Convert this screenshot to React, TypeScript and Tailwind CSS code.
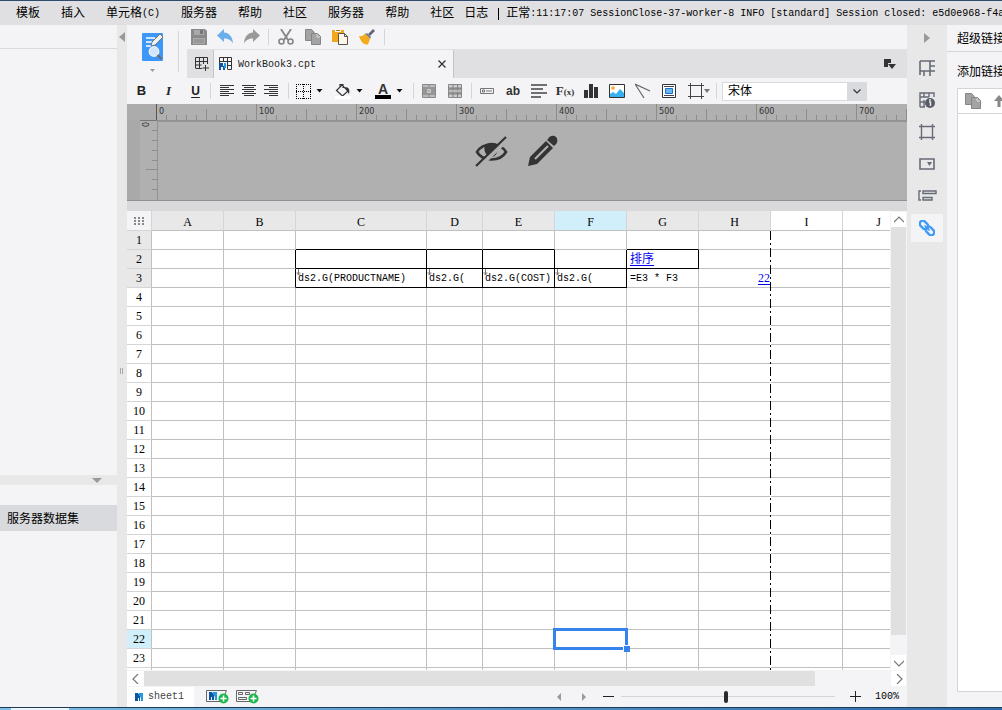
import React, { useState } from 'react';

const MENUS = ['模板', '插入', '单元格(C)', '服务器', '帮助', '社区', '服务器', '帮助', '社区'];

const COLUMNS = [
  { name: 'A', width: 72 },
  { name: 'B', width: 72 },
  { name: 'C', width: 131 },
  { name: 'D', width: 56 },
  { name: 'E', width: 72 },
  { name: 'F', width: 72 },
  { name: 'G', width: 72 },
  { name: 'H', width: 72 },
  { name: 'I', width: 72 },
  { name: 'J', width: 72 },
];

const ROWS = Array.from({ length: 24 }, (_, i) => i + 1);

// Cells bound to a dataset column expand downwards
const FIELDS: Record<string, string> = {
  C3: 'ds2.G(PRODUCTNAME)',
  D3: 'ds2.G(',
  E3: 'ds2.G(COST)',
  F3: 'ds2.G(',
};

const DARK_RIGHT = ['B2', 'C2', 'D2', 'E2', 'F2', 'G2', 'B3', 'C3', 'D3', 'E3', 'F3'];
const DARK_BOTTOM = ['C1', 'D1', 'E1', 'G1', 'C2', 'D2', 'E2', 'F2', 'G2', 'C3', 'D3', 'E3', 'F3'];

type IconProps = { children: React.ReactNode; className?: string; box?: string };

function Icon({ children, className = 'w-4 h-4', box = '0 0 16 16' }: IconProps) {
  return (
    <svg viewBox={box} className={`shrink-0 ${className}`} fill="none" aria-hidden="true">
      {children}
    </svg>
  );
}

function Sep() {
  return <span className="w-px h-4 shrink-0 bg-[#d5d5d8]" />;
}

function Caret() {
  return (
    <Icon className="w-[7px] h-1" box="0 0 7 4">
      <path d="M0.5 0h6L3.5 3.5z" fill="#111" />
    </Icon>
  );
}

type ToolProps = { label: string; className?: string; children: React.ReactNode };

function Tool({ label, className = 'w-[26px]', children }: ToolProps) {
  return (
    <button type="button" aria-label={label} className={`h-6 shrink-0 flex items-center justify-center ${className}`}>
      {children}
    </button>
  );
}

function CopyShape() {
  return (
    <>
      <path d="M.5.5h6L9 3v8.500H.5z" fill="#a3a3a3" stroke="#858585" />
      <path d="M6.500 4.500h6l3 3v8h-9z" fill="#a3a3a3" stroke="#858585" />
      <path d="M12 5v3h3" stroke="#ddd" />
    </>
  );
}

function MenuBar() {
  return (
    <div className="h-6 shrink-0 bg-[#e0e0e2] flex items-center pl-4 pt-[2px] whitespace-nowrap overflow-hidden">
      <nav className="flex gap-[21px] shrink-0">
        {MENUS.map((m, i) => (
          <button key={i} type="button" className="flex items-center">
            {m.replace('(C)', '')}
            {m.endsWith('(C)') && <span className="text-[10px]">(C)</span>}
          </button>
        ))}
      </nav>
      <div className="flex items-center pl-[10px]">
        <span>日志</span>
        <span className="w-px h-3 bg-black ml-[10px] mr-[7px]" />
        <span>正常</span>
        <span className="text-[10px] whitespace-pre">:11:17:07 SessionClose-37-worker-8 INFO [standard] Session closed: e5d0e968-f4a</span>
      </div>
    </div>
  );
}

function LeftPanel() {
  return (
    <aside className="w-[117px] shrink-0 flex flex-col">
      <div className="h-6 shrink-0 border-b border-[#dadadc]" />
      <div className="flex-1" />
      <div className="h-[10px] shrink-0 bg-[#e8e8e8] flex items-center pl-[92px]">
        <Icon className="w-[10px] h-[5px]" box="0 0 10 5">
          <path d="M0 0h10L5 5z" fill="#999" />
        </Icon>
      </div>
      <div className="h-[222px] shrink-0 pt-5">
        <div className="h-[26px] bg-[#d9dadd] flex items-center pl-[7px] pt-[3px]">服务器数据集</div>
      </div>
    </aside>
  );
}

function Divider() {
  return (
    <div className="w-[10px] shrink-0 bg-[#e8e8e8] flex flex-col items-center">
      <button type="button" aria-label="收起" className="h-6 shrink-0 flex items-center">
        <Icon className="w-[6px] h-[10px]" box="0 0 6 10">
          <path d="M6 0v10L0 5z" fill="#999" />
        </Icon>
      </button>
      <div className="flex-1 flex items-center gap-px pr-px pb-[14px]">
        <span className="w-px h-[6px] bg-[#aaa]" />
        <span className="w-px h-[6px] bg-[#aaa]" />
      </div>
    </div>
  );
}

function TopTools() {
  return (
    <div className="h-[25px] shrink-0 border-b border-[#e0e0e2] flex items-center">
      <Tool label="保存" className="w-[24px]">
        <Icon>
          <path d="M0 0h14l2 2v14H0z" fill="#8a8a8a" />
          <path d="M3 1h10v5H3zM2 9h12v6H2z" fill="#a9a9a9" />
          <path d="M9 1h3v4H9z" fill="#777" />
          <path d="M3 11h10M3 13h10" stroke="#888" />
        </Icon>
      </Tool>
      <Tool label="撤销" className="w-[27px]">
        <Icon>
          <path d="M0 6.500L7 0v3.500c5 .3 8.500 4 9 11-2-3.500-4.500-5-9-5V13z" fill="#6aaeeb" />
        </Icon>
      </Tool>
      <Tool label="重做" className="w-[27px]">
        <Icon>
          <path d="M16 6.500L9 0v3.500C4 3.800.5 7.500 0 14.500c2-3.500 4.500-5 9-5V13z" fill="#999" />
        </Icon>
      </Tool>
      <span className="w-[3px]" />
      <Sep />
      <span className="w-[3px]" />
      <Tool label="剪切" className="w-[27px]">
        <Icon>
          <path d="M3 0l7 11M13 0L6 11" stroke="#858585" strokeWidth="1.800" />
          <circle cx="3.500" cy="12.500" r="2.500" stroke="#858585" strokeWidth="1.600" />
          <circle cx="12.500" cy="12.500" r="2.500" stroke="#858585" strokeWidth="1.600" />
        </Icon>
      </Tool>
      <Tool label="复制" className="w-[27px]">
        <Icon><CopyShape /></Icon>
      </Tool>
      <Tool label="粘贴" className="w-[27px]">
        <Icon>
          <path d="M0 1h12v12H0z" fill="#f0a818" />
          <path d="M3 0h6v3H3z" fill="#fff" />
          <path d="M4 1.500h4" stroke="#b5651d" />
          <path d="M6.500 4.500h6l3 3v8h-9z" fill="#fff7e6" stroke="#555" />
          <path d="M12.500 4.500v3h3" stroke="#555" />
        </Icon>
      </Tool>
      <Tool label="格式刷" className="w-[27px]">
        <Icon>
          <path d="M15 1l-5 5" stroke="#5d6478" strokeWidth="2.600" />
          <path d="M8 4l4 4-1 2-5-5z" fill="#777d90" />
          <path d="M6 4.500l5 5.500-2 5.500c-4 .5-7-2-9-8.500 3 .5 4.500-.5 6-2.500z" fill="#f4ac1c" />
        </Icon>
      </Tool>
      <span className="w-1" />
      <Sep />
    </div>
  );
}

function TabBar() {
  return (
    <div className="h-7 shrink-0 bg-[#e0e0e2] flex items-center">
      <button type="button" aria-label="新建" className="w-[27px] h-7 border-r border-[#c4c4c6] flex items-center justify-center pl-1">
        <Icon className="w-[14px] h-[14px]" box="0 0 14 14">
          <path d="M.5 11V.5h12V7M.5 4.500h12M.5 11.500H7M4.500.5v11M8.500.5V7M.5 8h6M10.500 8v6M7.500 11h6.500" stroke="#333" />
        </Icon>
      </button>
      <div className="w-[240px] h-7 bg-[#f4f4f7] border-r border-[#c4c4c6] flex items-center pl-[5px] pr-[5px]">
        <Icon className="w-[14px] h-[14px]" box="0 0 14 14">
          <path d="M.5 6V.5h12v12H9M.5 4.500h12M4.500.5v4M8.500.5v12M8 8.500h4.500" stroke="#333" />
          <path d="M0 6h4v3h2v4H4V10H2v3H0z" fill="#0c55a0" />
          <path d="M5 6h2v5H5z" fill="#1d9be0" />
        </Icon>
        <span className="text-[10px] ml-[5px] pt-[2px] flex-1 text-[#222]">WorkBook3.cpt</span>
        <button type="button" aria-label="关闭" className="w-3 h-3 flex items-center justify-center">
          <Icon className="w-2 h-2" box="0 0 8 8">
            <path d="M.5.5l7 7M7.500.5l-7 7" stroke="#333" strokeWidth="1.300" />
          </Icon>
        </button>
      </div>
      <span className="flex-1" />
      <Tool label="标签列表" className="w-3 mr-[11px]">
        <Icon className="w-3 h-3" box="0 0 12 12">
          <path d="M0 1h7v4H4v4H0z" fill="#333" />
          <path d="M4 6h8L8 11z" fill="#333" />
        </Icon>
      </Tool>
    </div>
  );
}

function FormatBar() {
  return (
    <div className="h-[26px] shrink-0 flex items-center">
      <div className="flex pl-px pr-px">
        <Tool label="加粗" className="w-[27px]"><b className="text-[13px] font-['Liberation_Sans',sans-serif] text-[#222]">B</b></Tool>
        <Tool label="斜体" className="w-[27px]"><b className="text-[13px] italic font-['Liberation_Serif',serif] text-[#222]">I</b></Tool>
        <Tool label="下划线" className="w-[27px]"><b className="text-[12px] underline underline-offset-2 font-['Liberation_Sans',sans-serif] text-[#222]">U</b></Tool>
      </div>
      <Sep />
      <div className="flex pl-[5px] pr-[6px]">
        <Tool label="左对齐" className="w-[22px]">
          <Icon><path d="M1 2.500h14M1 4.500h9M1 6.500h14M1 8.500h9M1 10.500h14M1 12.500h9" stroke="#333" /></Icon>
        </Tool>
        <Tool label="居中" className="w-[22px]">
          <Icon><path d="M1 2.500h14M3 4.500h10M1 6.500h14M3 8.500h10M1 10.500h14M3 12.500h10" stroke="#333" /></Icon>
        </Tool>
        <Tool label="右对齐" className="w-[22px]">
          <Icon><path d="M1 2.500h14M6 4.500h9M1 6.500h14M6 8.500h9M1 10.500h14M6 12.500h9" stroke="#333" /></Icon>
        </Tool>
      </div>
      <Sep />
      <div className="flex pr-1">
        <Tool label="边框" className="w-10 gap-[5px]">
          <Icon className="w-[15px] h-[15px]" box="0 0 15 15">
            <path d="M0 .5h15M0 14.500h15M.5 0v15M14.500 0v15M7.500 0v15M0 7.500h15" stroke="#000" strokeDasharray="1 1" shapeRendering="crispEdges" />
          </Icon>
          <Caret />
        </Tool>
        <Tool label="填充色" className="w-10 gap-[5px]">
          <Icon>
            <path d="M1.500 7.500L7 2l6 6-5.500 5L1.500 7.500zM5 5V1.500h3V5" stroke="#333" strokeWidth="1.200" />
            <path d="M10 4c4 0 5 3 4 7l-2-3z" fill="#333" />
            <path d="M0 13h16v3H0z" fill="#fff" />
          </Icon>
          <Caret />
        </Tool>
        <Tool label="字体颜色" className="w-10 gap-[5px]">
          <span className="w-4 flex flex-col items-center">
            <b className="text-[14px] leading-[12px] font-['Liberation_Sans',sans-serif] text-[#333]">A</b>
            <span className="w-4 h-1 bg-black" />
          </span>
          <Caret />
        </Tool>
      </div>
      <Sep />
      <div className="flex pl-[2px] pr-[3px]">
        <Tool label="合并单元格">
          <Icon className="w-[14px] h-[14px]" box="0 0 14 14">
            <path d="M.5.5h13v13H.5z" fill="#bbb" stroke="#888" />
            <path d="M1 3h12v8H1z" fill="#969696" />
            <path d="M7 0v3M7 11v3" stroke="#888" />
            <path d="M5 5.500h3.500v3H5.500V7h3" stroke="#ccc" />
          </Icon>
        </Tool>
        <Tool label="取消合并">
          <Icon className="w-[14px] h-[14px]" box="0 0 14 14">
            <path d="M.5.500h13v13H.5z" fill="#ccc" stroke="#888" />
            <path d="M1 4h12v6H1z" fill="#999" />
            <path d="M0 4h14M0 10h14M5 0v14M9.500 0v14" stroke="#808080" />
            <path d="M1 7h12" stroke="#ddd" />
          </Icon>
        </Tool>
      </div>
      <Sep />
      <div className="flex pl-[2px]">
        <Tool label="控件">
          <Icon className="w-[14px] h-[6px]" box="0 0 14 6">
            <path d="M.5.500h13v5H.5zM2.500 2h2v2h-2zM6 3h6" stroke="#777" />
          </Icon>
        </Tool>
        <Tool label="文本"><b className="text-[12px] font-['Liberation_Sans',sans-serif] text-[#333]">ab</b></Tool>
        <Tool label="富文本">
          <Icon><path d="M0 2h16M0 6h12M0 10h16M0 14h10" stroke="#444" strokeWidth="1.600" /></Icon>
        </Tool>
        <Tool label="公式">
          <span className="font-['Liberation_Serif',serif] font-bold text-[13px] text-[#333]">F<span className="text-[9px]">(x)</span></span>
        </Tool>
        <Tool label="图表">
          <Icon className="w-[14px] h-[14px]" box="0 0 14 14">
            <path d="M0 6h4v8H0zM5 0h4v14H5zM10 3h4v11h-4z" fill="#333" />
          </Icon>
        </Tool>
        <Tool label="图片">
          <Icon>
            <path d="M.5 1.500h15v13H.5z" fill="#fff" stroke="#333" />
            <circle cx="4" cy="5" r="1.700" fill="#f5a623" />
            <path d="M1 14v-3l3-2 3 2 4-5 4 4v4z" fill="#37b1f0" />
          </Icon>
        </Tool>
        <Tool label="斜线">
          <Icon><path d="M0 1l9 14M0 1l15 7" stroke="#666" strokeWidth="1.200" /></Icon>
        </Tool>
        <Tool label="子报表">
          <Icon className="w-[14px] h-4" box="0 0 14 16">
            <path d="M.5 1.500h13v13H.5z" fill="#fff" stroke="#333" />
            <path d="M2 3.500h10M2 12.500h10" stroke="#444" />
            <path d="M3.500 5.500h7v5h-7z" fill="#65b7f2" stroke="#1d6fd0" />
          </Icon>
        </Tool>
        <Tool label="悬浮元素" className="w-[34px]">
          <Icon>
            <path d="M2.500 0v16M13.500 0v16M0 2.500h16M0 13.500h16" stroke="#444" />
          </Icon>
          <Icon className="w-[6px] h-1" box="0 0 6 4"><path d="M0 0h6L3 4z" fill="#777" /></Icon>
        </Tool>
      </div>
      <Sep />
      <label className="ml-[5px] w-[145px] h-[19px] grid border border-[#d9dadd] bg-white">
        <select aria-label="字体" className="col-start-1 row-start-1 appearance-none h-[17px] pl-[5px] pt-px leading-4 outline-none">
          <option>宋体</option>
        </select>
        <span className="col-start-1 row-start-1 justify-self-end w-[19px] bg-[#d9dadd] flex items-center justify-center pointer-events-none">
          <Icon className="w-2 h-[5px]" box="0 0 8 5"><path d="M.5.5L4 4 7.500.5" stroke="#333" strokeWidth="1.200" /></Icon>
        </span>
      </label>
    </div>
  );
}

function ruleTicks(count: number) {
  return Array.from({ length: count }, (_, i) => ({ at: i * 10, len: i % 10 === 0 ? 16 : i % 5 === 0 ? 11 : 5 }));
}

function ParamPane() {
  return (
    <div className="h-[97px] shrink-0 bg-[#b0b0b0] border-b border-[#909090] flex flex-col overflow-hidden">
      <div className="h-4 shrink-0 flex">
        <div className="w-[29px] shrink-0 bg-[#acacac]" />
        <svg className="flex-1 min-w-0 h-4" aria-hidden="true" shapeRendering="crispEdges">
          {ruleTicks(76).map((t) => (
            <React.Fragment key={t.at}>
              <path d={`M${t.at + 0.5} ${16 - t.len}V16`} stroke={t.at === 0 ? '#555' : '#8c8c8c'} />
              {t.at % 100 === 0 && (
                <text x={t.at + 3} y="10" fill="#333" className="text-[9px] font-['DejaVu_Sans_Condensed','DejaVu_Sans',sans-serif]">{t.at}</text>
              )}
            </React.Fragment>
          ))}
        </svg>
      </div>
      <div className="flex-1 flex">
        <div className="w-[13px] shrink-0 bg-[#a9a9a9]" />
        <svg className="w-[17px] shrink-0 h-20 border-t border-[#777]" viewBox="0 0 17 80" aria-hidden="true" shapeRendering="crispEdges">
          {ruleTicks(8).slice(1).map((t) => (
            <path key={t.at} d={`M${17 - t.len} ${t.at - 0.5}H17`} stroke="#8c8c8c" />
          ))}
          <text transform="rotate(-90)" x="-6" y="9" fill="#333" className="text-[9px] font-['DejaVu_Sans_Condensed','DejaVu_Sans',sans-serif]">0</text>
        </svg>
        <div className="flex-1 border-t-2 border-l border-[#939393] flex justify-center gap-[19px] pt-[13px] pr-8">
          <button type="button" aria-label="隐藏参数面板" className="w-[33px] h-[32px]">
            <Icon className="w-[33px] h-[32px]" box="0 0 33 32">
              <path d="M2 17C8 7 25 7 31 17 25 27 8 27 2 17z" stroke="#333" strokeWidth="2.600" />
              <path d="M10 10c4-3 10-3 13 0 1 7-3 13-8 12-4-1-7-7-5-12z" fill="#333" />
              <path d="M3 33L33 4" stroke="#b0b0b0" strokeWidth="4" />
              <path d="M1 31L31 2" stroke="#333" strokeWidth="2.200" />
            </Icon>
          </button>
          <button type="button" aria-label="编辑参数面板" className="w-[31px] h-[32px]">
            <Icon className="w-[31px] h-[32px]" box="0 0 31 32">
              <path d="M1 31l2-9L19 6l7 7-16 16z" fill="#333" />
              <path d="M21 4c2-4 6-4 8-2s2 6-1 8l-1 1-7-6z" fill="#333" />
              <path d="M8 24L21 11" stroke="#b0b0b0" strokeWidth="2.200" />
            </Icon>
          </button>
        </div>
      </div>
    </div>
  );
}

function CellContent({ id }: { id: string }) {
  if (FIELDS[id]) {
    return (
      <span className="block pl-[2px] pt-px text-[10px]">
        <svg className="absolute left-0 top-0 w-[5px] h-[7px]" viewBox="0 0 5 7" fill="none" aria-hidden="true">
          <path d="M2.500 0v6M.5 4h4M1.500 5.500h2" stroke="#777" />
        </svg>
        {FIELDS[id]}
      </span>
    );
  }
  if (id === 'G2') return <a href="#sort" className="block pl-[3px] pt-[2px] leading-4 text-[#0000ee] underline underline-offset-2">排序</a>;
  if (id === 'G3') return <span className="block pl-[3px] pt-px text-[10px] whitespace-pre">=E3 * F3</span>;
  if (id === 'H3') return <a href="#detail" className="block text-right font-['Liberation_Serif',serif] text-[#0000ee] underline underline-offset-2">22</a>;
  if (id === 'H1') {
    // page break guide
    return <span className="absolute z-10 top-0 -right-px w-px h-[456px] bg-[repeating-linear-gradient(to_bottom,#000_0px,#000_9px,#fff_9px,#fff_12px,#000_12px,#000_14px,#fff_14px,#fff_17px)]" />;
  }
  if (id === 'F22') {
    return (
      <>
        <span className="absolute z-10 -top-[2px] -left-[2px] -right-[2px] -bottom-[2px] border-[3px] border-[#3584ee]" />
        <span className="absolute z-10 -bottom-1 -right-1 w-[7px] h-[7px] bg-[#3584ee] border-t border-l border-white" />
      </>
    );
  }
  return null;
}

function Grid() {
  return (
    <div className="flex-1 min-w-0 overflow-hidden bg-white">
      <table className="table-fixed w-[788px] border-separate border-spacing-0">
        <colgroup>
          <col className="w-[25px]" />
          {COLUMNS.map((c) => <col key={c.name} style={{ width: c.width }} />)}
        </colgroup>
        <thead>
          <tr className="h-5">
            <th className="p-0 h-5 bg-[#f4f4f7] border-r border-b border-[#d5d5d8]">
              <Icon className="w-[10px] h-2 mx-auto" box="0 0 10 8">
                <path d="M0 1h10M0 4h10M0 7h10" stroke="#888" strokeWidth="2" strokeDasharray="2 2" />
              </Icon>
            </th>
            {COLUMNS.map((c) => (
              <th
                key={c.name}
                scope="col"
                className={`p-0 h-5 pt-[3px] leading-4 font-normal font-['Liberation_Serif',serif] border-r border-b border-r-[#d5d5d8] border-b-[#c0c0c0] ${
                  c.name === 'F' ? 'bg-[#d0effb]' : c.name > 'H' ? 'bg-white' : 'bg-[#e8e8e8]'
                }`}
              >
                {c.name}
              </th>
            ))}
          </tr>
        </thead>
        <tbody>
          {ROWS.map((r) => (
            <tr key={r} className="h-[19px]">
              <th
                scope="row"
                className={`p-0 h-[19px] leading-[18px] font-normal font-['Liberation_Serif',serif] border-r border-b border-r-[#c0c0c0] border-b-[#d5d5d8] ${
                  r === 22 ? 'bg-[#d0effb]' : r > 3 ? 'bg-white' : 'bg-[#e8e8e8]'
                }`}
              >
                {r < 24 ? r : ''}
              </th>
              {COLUMNS.map((c) => {
                const id = c.name + r;
                return (
                  <td
                    key={id}
                    className={`relative p-0 h-[19px] leading-[17px] whitespace-nowrap border-r border-b ${
                      DARK_RIGHT.includes(id) ? 'border-r-black' : 'border-r-[#c0c0c0]'
                    } ${DARK_BOTTOM.includes(id) ? 'border-b-black' : 'border-b-[#c0c0c0]'}`}
                  >
                    <CellContent id={id} />
                  </td>
                );
              })}
            </tr>
          ))}
        </tbody>
      </table>
    </div>
  );
}

function ScrollArrow({ label, d }: { label: string; d: string }) {
  return (
    <button type="button" aria-label={label} className="w-[15px] h-[15px] shrink-0 bg-white flex items-center justify-center">
      <Icon className="w-[10px] h-[10px]" box="0 0 10 10"><path d={d} stroke="#777" strokeWidth="1.200" /></Icon>
    </button>
  );
}

function SheetPane() {
  return (
    <div className="flex-1 min-h-0 flex flex-col pt-[10px] bg-[#d9d9dc]">
      <div className="flex-1 min-h-0 flex">
        <Grid />
        <div className="w-[17px] shrink-0 bg-[#f4f4f7] flex flex-col items-center pt-px">
          <ScrollArrow label="向上" d="M0 7l5-5 5 5" />
          <div className="w-[15px] h-[408px] bg-[#e0e0e0]" />
          <div className="flex-1" />
          <ScrollArrow label="向下" d="M0 3l5 5 5-5" />
        </div>
      </div>
    </div>
  );
}

function NewSheetIcon({ kind }: { kind: 'report' | 'form' }) {
  return (
    <Icon className="w-[23px] h-[14px]" box="0 0 23 14">
      <path d="M17 11.500H.5V.5h20L19 4" stroke="#666" />
      {kind === 'report' ? (
        <>
          <path d="M3 2h3l2 3v5H6V7H5v3H3z" fill="#0c55a0" />
          <path d="M7 2h4v8H9V7L7 4z" fill="#2199e0" />
        </>
      ) : (
        <path d="M2.500 2.500h4v2h-4zM9.500 2.500h4v2h-4zM2.500 7.500h8v2h-8z" stroke="#666" />
      )}
      <circle cx="17.500" cy="8.500" r="5" fill="#1cb84c" />
      <path d="M14.500 8.500h6M17.500 5.500v6" stroke="#fff" strokeWidth="1.600" />
    </Icon>
  );
}

function BottomBar() {
  const [zoom, setZoom] = useState(49);

  return (
    <>
      <div className="h-4 shrink-0 flex items-center pt-px pr-px">
        <div className="w-[17px] flex justify-center bg-white">
          <ScrollArrow label="向左" d="M7 0L2 5l5 5" />
        </div>
        <div className="h-[15px] w-[671px] bg-[#e0e0e0]" />
        <div className="flex-1" />
        <ScrollArrow label="向右" d="M3 0l5 5-5 5" />
      </div>
      <div className="h-[21px] shrink-0 flex items-center">
        <button type="button" className="w-[67px] h-5 bg-white flex items-center pl-2 gap-[5px] text-[10px] text-[#444]">
          <Icon className="w-2 h-2" box="0 0 8 8">
            <path d="M0 0h3l2 3v5H4V5H3v3H0z" fill="#0c55a0" />
            <path d="M4 0h4v8H6V5L4 2z" fill="#2199e0" />
          </Icon>
          sheet1
        </button>
        <Tool label="新建报表" className="w-[23px] ml-3"><NewSheetIcon kind="report" /></Tool>
        <Tool label="新建表单" className="w-[23px] ml-[7px]"><NewSheetIcon kind="form" /></Tool>
        <span className="flex-1" />
        <Tool label="上一页" className="w-[25px]">
          <Icon className="w-1 h-2" box="0 0 4 8"><path d="M4 0v8L0 4z" fill="#999" /></Icon>
        </Tool>
        <Tool label="下一页" className="w-[25px]">
          <Icon className="w-1 h-2" box="0 0 4 8"><path d="M0 0v8l4-4z" fill="#999" /></Icon>
        </Tool>
        <Tool label="缩小" className="w-[25px]">
          <Icon className="w-[11px] h-[11px]" box="0 0 11 11"><path d="M0 5.500h11" stroke="#222" /></Icon>
        </Tool>
        <input
          type="range"
          aria-label="缩放"
          value={zoom}
          onChange={(e) => setZoom(Number(e.target.value))}
          className="w-[214px] h-3 appearance-none bg-transparent [&::-webkit-slider-runnable-track]:h-px [&::-webkit-slider-runnable-track]:bg-[#d5d5d8] [&::-webkit-slider-thumb]:appearance-none [&::-webkit-slider-thumb]:w-1 [&::-webkit-slider-thumb]:h-3 [&::-webkit-slider-thumb]:-mt-[5px] [&::-webkit-slider-thumb]:rounded-[2px] [&::-webkit-slider-thumb]:bg-[#2b2b2b]"
        />
        <Tool label="放大" className="w-[40px]">
          <Icon className="w-[11px] h-[11px]" box="0 0 11 11"><path d="M0 5.500h11M5.500 0v11" stroke="#222" /></Icon>
        </Tool>
        <span className="w-8 text-[10px]">100%</span>
      </div>
    </>
  );
}

function Rail() {
  const icons = [
    { label: '单元格属性', art: <path d="M1 1v14M1 1h15M11 1v10M1 11h15M11 6h5M5 11v5M11 11v5" stroke="#666b76" strokeWidth="1.600" /> },
    {
      label: '单元格信息',
      art: (
        <>
          <path d="M1 15V1h14v4M1 5h9M5 1v4M10 1v4M1 10h5M5 8v7M1 15h5" stroke="#666b76" strokeWidth="1.400" />
          <circle cx="11" cy="11" r="5" fill="#585d68" />
          <path d="M11 7v2M10 10h1.500v4" stroke="#e8e8e8" strokeWidth="1.400" />
        </>
      ),
    },
    { label: '悬浮元素', art: <path d="M2.500 0v16M13.500 0v16M0 2.500h16M0 13.500h16" stroke="#666b76" strokeWidth="1.400" /> },
    {
      label: '控件设置',
      art: (
        <>
          <path d="M1 3h14v10H1z" stroke="#666b76" strokeWidth="1.600" />
          <path d="M8 6h5l-2.500 4z" fill="#666b76" />
        </>
      ),
    },
    { label: '条件属性', art: <path d="M2 3H0v9h2M4 3h13v2.500H4zM4 9.500h9V12H4z" stroke="#666b76" strokeWidth="1.400" /> },
  ];

  return (
    <aside className="w-10 shrink-0 bg-[#e8e8e8] flex flex-col items-center gap-1">
      <button type="button" aria-label="收起" className="w-8 h-[25px] flex items-center justify-center">
        <Icon className="w-[6px] h-[10px]" box="0 0 6 10"><path d="M0 0v10l6-5z" fill="#999" /></Icon>
      </button>
      {icons.map((i) => (
        <button key={i.label} type="button" aria-label={i.label} className="w-8 h-7 flex items-center justify-center">
          <Icon className="w-4 h-4 overflow-visible">{i.art}</Icon>
        </button>
      ))}
      <button type="button" aria-label="超级链接" className="w-8 h-7 bg-[#f4f4f7] flex items-center justify-center">
        <Icon>
          <g stroke="#409bf5" strokeWidth="2.400" transform="rotate(45 8 8)">
            <rect x="-1" y="5" width="9.500" height="6" rx="3" />
            <rect x="7.500" y="5" width="9.500" height="6" rx="3" />
          </g>
          <path d="M5.500 5.500l5 5" stroke="#409bf5" strokeWidth="1.600" />
        </Icon>
      </button>
    </aside>
  );
}

function LinkPanel() {
  return (
    <aside className="w-[55px] shrink-0 flex flex-col whitespace-nowrap overflow-hidden">
      <h2 className="h-[27px] shrink-0 border-b border-[#d5d5d8] pl-[10px] pt-[3px] flex items-center">超级链接</h2>
      <p className="h-9 shrink-0 pl-[10px] pt-[13px] leading-4">添加链接</p>
      <div className="flex-1 ml-[10px] mb-[15px] border-l border-y border-[#d5d5d8] bg-white">
        <div className="h-[25px] border-b border-[#d5d5d8] flex items-center pl-[7px] w-20">
          <Tool label="复制" className="w-4"><Icon><CopyShape /></Icon></Tool>
          <Tool label="上移" className="w-3 ml-3">
            <Icon className="w-3 h-3" box="0 0 12 12"><path d="M6 0l5 6H7.500v6h-3V6H1z" fill="#888" /></Icon>
          </Tool>
        </div>
      </div>
    </aside>
  );
}

export default function App() {
  return (
    <div className="h-screen flex flex-col overflow-hidden bg-[#f4f4f7] text-black text-[12px] leading-4 font-['Liberation_Mono','Noto_Sans_CJK_SC',monospace]">
      <div className="h-px shrink-0 bg-[#2f4b70]" />
      <MenuBar />
      <div className="flex-1 min-h-0 flex">
        <LeftPanel />
        <Divider />
        <main className="flex-1 min-w-0 flex flex-col">
          <div className="flex shrink-0">
            <div className="w-[60px] shrink-0 flex items-center">
              <button type="button" aria-label="预览" className="w-[51px] flex flex-col items-center gap-2">
                <Icon className="w-[23px] h-[29px]" box="0 0 23 29">
                  <rect x="1" y="1" width="21" height="28" rx="1" fill="#3c97f7" />
                  <path d="M5 6h9M5 10h7M5 14h5" stroke="#fff" strokeWidth="1.600" />
                  <path d="M10 14l1-4 8-8 3 3-8 8z" fill="#f2f2f2" stroke="#777" />
                  <circle cx="13" cy="19.500" r="4.800" fill="#cfe6fd" stroke="#f2f2f2" strokeWidth="1.200" />
                  <path d="M16.500 23l4 4" stroke="#6b6b6b" strokeWidth="2.200" />
                </Icon>
                <Icon className="w-[5px] h-[3px]" box="0 0 5 3"><path d="M0 0h5L2.500 3z" fill="#999" /></Icon>
              </button>
              <span className="w-px h-[41px] bg-[#d5d5d8]" />
            </div>
            <div className="flex-1 min-w-0 flex flex-col">
              <TopTools />
              <TabBar />
            </div>
          </div>
          <FormatBar />
          <ParamPane />
          <SheetPane />
          <BottomBar />
        </main>
        <Rail />
        <LinkPanel />
      </div>
      <div className="h-[3px] shrink-0 border-t border-[#1f3a57] bg-gradient-to-r from-[#7fc0e6] to-[#2c6aa8] flex pl-[11px]">
        <span className="w-[58px] bg-[#eef5fa]" />
      </div>
    </div>
  );
}
